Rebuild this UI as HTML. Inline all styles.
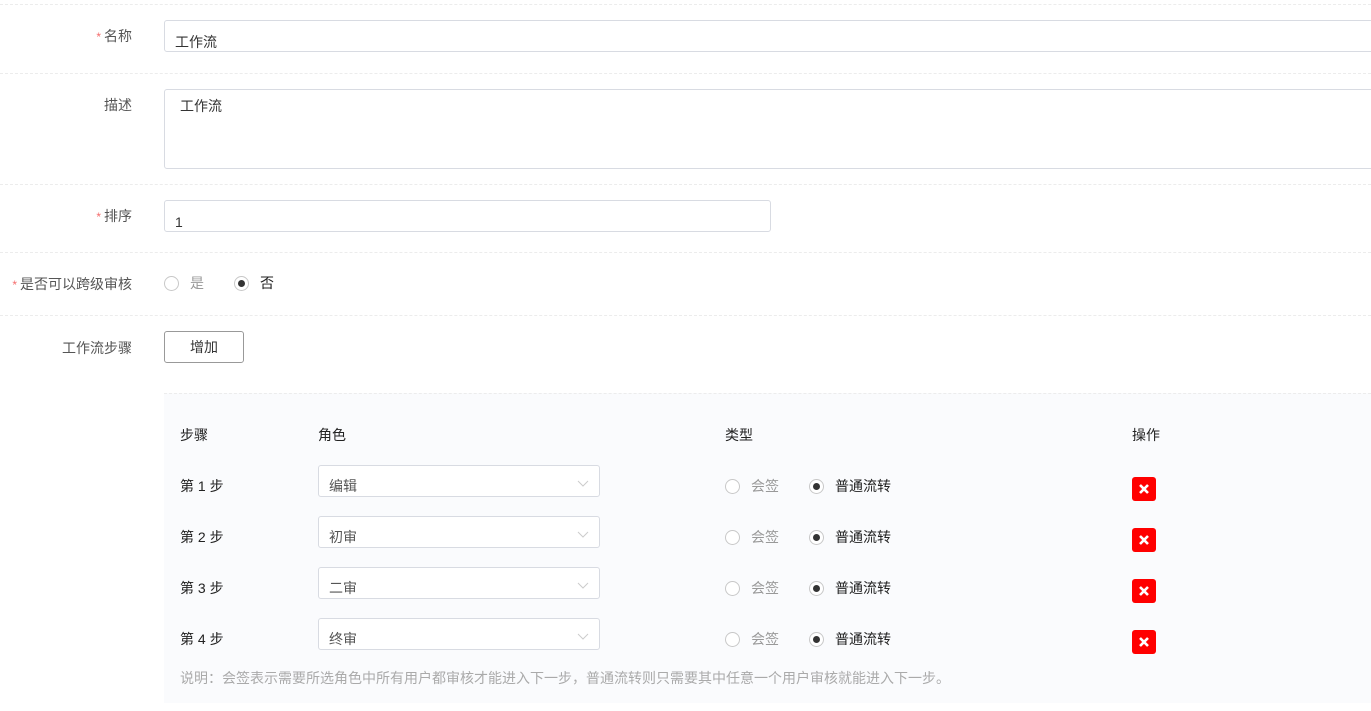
<!DOCTYPE html>
<html><head><meta charset="utf-8"><style>
*{box-sizing:border-box;margin:0;padding:0}
body{width:1371px;height:711px;overflow:hidden;background:#fff;font-family:"Liberation Sans","Noto Sans CJK SC",sans-serif;font-size:14px;color:#333;position:relative}
.a{position:absolute}
.hr{position:absolute;left:0;width:1371px;border-top:1px dashed #ececec}
.lbl{position:absolute;right:1239px;color:#555;white-space:nowrap;line-height:16px}
.lbl i{color:#f56c6c;font-style:normal;margin-right:3px;font-size:12px}
.inp{position:absolute;border:1px solid #d8dbe2;border-radius:3px;background:#fff;color:#333}
.rad{position:absolute;width:15px;height:15px;border:1px solid #c8c8c8;border-radius:50%;background:#fff}
.rad.on::after{content:"";position:absolute;left:3px;top:3px;width:7px;height:7px;border-radius:50%;background:#333}
.t{position:absolute;white-space:nowrap;line-height:16px}
.sel{position:absolute;left:318px;width:282px;height:32px;border:1px solid #d8dbe2;border-radius:3px;background:#fff}
.sel span{position:absolute;left:10px;top:12px;color:#555;line-height:16px}
.sel svg{position:absolute;right:10px;top:14px}
.del{position:absolute;left:1132px;width:24px;height:24px;background:#f00;border-radius:3px}
</style></head><body>
<div class="hr" style="top:4px"></div>
<div class="lbl" style="top:28px"><i>*</i>名称</div>
<div class="inp" style="left:164px;top:20px;width:1220px;height:32px"><span class="t" style="left:10px;top:13px">工作流</span></div>
<div class="hr" style="top:73px"></div>
<div class="lbl" style="top:97px">描述</div>
<div class="inp" style="left:164px;top:89px;width:1220px;height:80px"><span class="t" style="left:15px;top:8px">工作流</span></div>
<div class="hr" style="top:184px"></div>
<div class="lbl" style="top:208px"><i>*</i>排序</div>
<div class="inp" style="left:164px;top:200px;width:607px;height:32px"><span class="t" style="left:10px;top:13px">1</span></div>
<div class="hr" style="top:252px"></div>
<div class="lbl" style="top:276px"><i>*</i>是否可以跨级审核</div>
<div class="rad" style="left:164px;top:276px"></div><span class="t" style="left:190px;top:275px;color:#999">是</span>
<div class="rad on" style="left:234px;top:276px"></div><span class="t" style="left:260px;top:275px;color:#222">否</span>
<div class="hr" style="top:315px"></div>
<div class="lbl" style="top:340px">工作流步骤</div>
<div class="a" style="left:164px;top:331px;width:80px;height:32px;border:1px solid #999;border-radius:3px;text-align:center;line-height:30px;color:#333">增加</div>
<div class="a" style="left:164px;top:393px;width:1207px;height:310px;background:#fafbfd;border-top:1px dashed #ececec"></div>
<span class="t" style="left:180px;top:427px;color:#222">步骤</span>
<span class="t" style="left:318px;top:427px;color:#222">角色</span>
<span class="t" style="left:725px;top:427px;color:#222">类型</span>
<span class="t" style="left:1132px;top:427px;color:#222">操作</span>

<span class="t" style="left:180px;top:478px;color:#222">第 1 步</span>
<div class="sel" style="top:465px"><span>编辑</span><svg width="12" height="7"><path d="M1 1l5 5 5-5" fill="none" stroke="#ccc"/></svg></div>
<div class="rad" style="left:725px;top:479px"></div><span class="t" style="left:751px;top:478px;color:#999">会签</span>
<div class="rad on" style="left:809px;top:479px"></div><span class="t" style="left:835px;top:478px;color:#222">普通流转</span>
<div class="del" style="top:477px"><svg width="24" height="24"><path d="M8 8l8 8M16 8l-8 8" stroke="#fff" stroke-width="2.6"/></svg></div>

<span class="t" style="left:180px;top:529px;color:#222">第 2 步</span>
<div class="sel" style="top:516px"><span>初审</span><svg width="12" height="7"><path d="M1 1l5 5 5-5" fill="none" stroke="#ccc"/></svg></div>
<div class="rad" style="left:725px;top:530px"></div><span class="t" style="left:751px;top:529px;color:#999">会签</span>
<div class="rad on" style="left:809px;top:530px"></div><span class="t" style="left:835px;top:529px;color:#222">普通流转</span>
<div class="del" style="top:528px"><svg width="24" height="24"><path d="M8 8l8 8M16 8l-8 8" stroke="#fff" stroke-width="2.6"/></svg></div>

<span class="t" style="left:180px;top:580px;color:#222">第 3 步</span>
<div class="sel" style="top:567px"><span>二审</span><svg width="12" height="7"><path d="M1 1l5 5 5-5" fill="none" stroke="#ccc"/></svg></div>
<div class="rad" style="left:725px;top:581px"></div><span class="t" style="left:751px;top:580px;color:#999">会签</span>
<div class="rad on" style="left:809px;top:581px"></div><span class="t" style="left:835px;top:580px;color:#222">普通流转</span>
<div class="del" style="top:579px"><svg width="24" height="24"><path d="M8 8l8 8M16 8l-8 8" stroke="#fff" stroke-width="2.6"/></svg></div>

<span class="t" style="left:180px;top:631px;color:#222">第 4 步</span>
<div class="sel" style="top:618px"><span>终审</span><svg width="12" height="7"><path d="M1 1l5 5 5-5" fill="none" stroke="#ccc"/></svg></div>
<div class="rad" style="left:725px;top:632px"></div><span class="t" style="left:751px;top:631px;color:#999">会签</span>
<div class="rad on" style="left:809px;top:632px"></div><span class="t" style="left:835px;top:631px;color:#222">普通流转</span>
<div class="del" style="top:630px"><svg width="24" height="24"><path d="M8 8l8 8M16 8l-8 8" stroke="#fff" stroke-width="2.6"/></svg></div>

<span class="t" style="left:180px;top:670px;color:#aaa">说明：会签表示需要所选角色中所有用户都审核才能进入下一步，普通流转则只需要其中任意一个用户审核就能进入下一步。</span>
</body></html>
